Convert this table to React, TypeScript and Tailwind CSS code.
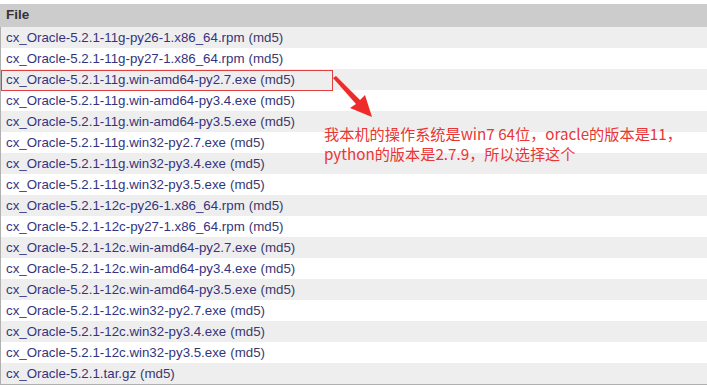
const FILES = [
  'cx_Oracle-5.2.1-11g-py26-1.x86_64.rpm',
  'cx_Oracle-5.2.1-11g-py27-1.x86_64.rpm',
  'cx_Oracle-5.2.1-11g.win-amd64-py2.7.exe',
  'cx_Oracle-5.2.1-11g.win-amd64-py3.4.exe',
  'cx_Oracle-5.2.1-11g.win-amd64-py3.5.exe',
  'cx_Oracle-5.2.1-11g.win32-py2.7.exe',
  'cx_Oracle-5.2.1-11g.win32-py3.4.exe',
  'cx_Oracle-5.2.1-11g.win32-py3.5.exe',
  'cx_Oracle-5.2.1-12c-py26-1.x86_64.rpm',
  'cx_Oracle-5.2.1-12c-py27-1.x86_64.rpm',
  'cx_Oracle-5.2.1-12c.win-amd64-py2.7.exe',
  'cx_Oracle-5.2.1-12c.win-amd64-py3.4.exe',
  'cx_Oracle-5.2.1-12c.win-amd64-py3.5.exe',
  'cx_Oracle-5.2.1-12c.win32-py2.7.exe',
  'cx_Oracle-5.2.1-12c.win32-py3.4.exe',
  'cx_Oracle-5.2.1-12c.win32-py3.5.exe',
  'cx_Oracle-5.2.1.tar.gz',
];

export default function App() {
  return (
    <div
      className="w-[707px] h-[388px] bg-white relative overflow-hidden"
      style={{ fontFamily: '"Liberation Sans", Arial, sans-serif' }}
    >
      <div className="pt-[4px]">
        {/* Header */}
        <div className="h-[23px] bg-[#cccccc] flex items-center pl-[6px] text-[13.5px] font-bold text-[#333333]">
          File
        </div>

        {/* Rows */}
        <div className="border-b border-l border-[#b0b0b0]">
          {FILES.map((name, i) => (
            <div
              key={i}
              className={`h-[21px] flex items-center pl-[5px] text-[13.3px] text-[#34347e] ${
                i % 2 === 0 ? 'bg-[#eeeeee]' : 'bg-white'
              }`}
            >
              <span>{name}</span>
              <span className="ml-[4px] text-[#3a3a6e]">(md5)</span>
            </div>
          ))}
        </div>
      </div>

      {/* Annotation: red box around selected file */}
      <div className="absolute left-[1px] top-[70px] w-[332px] h-[21px] border border-[#e04040]" />

      {/* Annotation arrow */}
      <svg className="absolute left-0 top-0" width="707" height="388">
        <polygon points="333,78 336,76 360,100 365,95 372,117 350,108 356,104" fill="#ee2a2a" />
      </svg>

      {/* Annotation text */}
      <div
        className="absolute left-[324px] top-[123px] text-[15.2px] leading-[20px] text-[#ea3535]"
        style={{ fontFamily: '"Noto Sans CJK SC", "Liberation Sans", sans-serif' }}
      >
        <div>我本机的操作系统是win7 64位，oracle的版本是11，</div>
        <div>python的版本是2.7.9，所以选择这个</div>
      </div>
    </div>
  );
}
